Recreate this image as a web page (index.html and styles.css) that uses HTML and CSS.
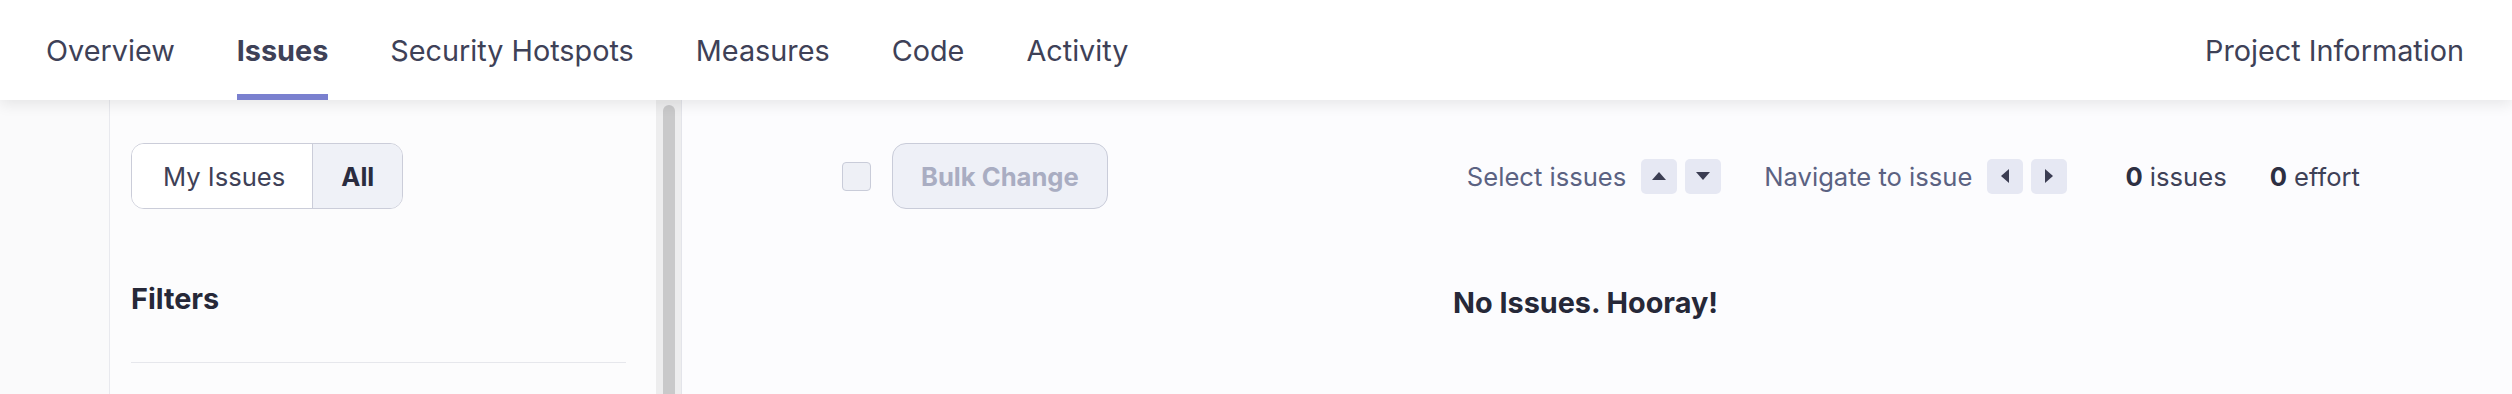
FILE: index.html
```html
<!DOCTYPE html>
<html>
<head>
<meta charset="utf-8">
<link rel="stylesheet" href="styles.css">
</head>
<body>
<header class="topbar">
  <nav class="tabs">
    <a class="tab">Overview</a>
    <a class="tab active">Issues</a>
    <a class="tab">Security Hotspots</a>
    <a class="tab">Measures</a>
    <a class="tab">Code</a>
    <a class="tab">Activity</a>
  </nav>
  <a class="tab info">Project Information</a>
</header>
<div class="page">
  <div class="gutter"></div>
  <aside class="sidebar">
    <div class="side-inner">
      <div class="toggle">
        <button class="tog">My Issues</button>
        <button class="tog selected">All</button>
      </div>
      <h2 class="filters">Filters</h2>
      <hr class="sep">
    </div>
    <div class="scroll"><div class="thumb"></div></div>
  </aside>
  <main class="main">
    <div class="toolbar">
      <div class="left">
        <span class="checkbox"></span>
        <button class="bulk">Bulk Change</button>
      </div>
      <div class="right">
        <span class="hint">Select issues</span>
        <span class="key"><svg width="14" height="8" viewBox="0 0 14 8"><path d="M7 0L14 8H0Z" fill="#3b3d52"/></svg></span>
        <span class="key"><svg width="14" height="8" viewBox="0 0 14 8"><path d="M0 0H14L7 8Z" fill="#3b3d52"/></svg></span>
        <span class="hint gap">Navigate to issue</span>
        <span class="key"><svg width="8" height="14" viewBox="0 0 8 14"><path d="M8 0V14L0 7Z" fill="#3b3d52"/></svg></span>
        <span class="key"><svg width="8" height="14" viewBox="0 0 8 14"><path d="M0 0L8 7L0 14Z" fill="#3b3d52"/></svg></span>
        <span class="count first"><b>0</b> issues</span>
        <span class="count"><b>0</b> effort</span>
      </div>
    </div>
    <div class="empty">No Issues. Hooray!</div>
  </main>
</div>
</body>
</html>
```
FILE: styles.css
```css
html, body {
  margin: 0;
  padding: 0;
}
body {
  width: 2512px;
  height: 394px;
  overflow: hidden;
  background: #fbfbfc;
  font-family: Inter, "Noto Sans", sans-serif;
  color: #3e4157;
}
.topbar {
  position: relative;
  z-index: 2;
  height: 100px;
  background: #ffffff;
  display: flex;
  justify-content: space-between;
  align-items: stretch;
  padding: 0 48px 0 46px;
  box-shadow: 0 4px 14px rgba(0, 0, 0, 0.09);
}
.tabs {
  display: flex;
  gap: 62px;
}
.tab {
  display: flex;
  align-items: center;
  font-size: 28.8px;
  color: #3e4157;
  border-bottom: 6px solid transparent;
  padding-top: 6px;
  box-sizing: border-box;
}
.tab.active {
  font-weight: 700;
  border-bottom-color: #7a80cf;
}
.page {
  display: flex;
  height: 294px;
}
.gutter {
  width: 109px;
  background: #fafafb;
}
.sidebar {
  width: 572px;
  display: flex;
  border-left: 1px solid #e8e9ee;
  background: #fcfcfd;
}
.side-inner {
  flex: 1;
  padding: 43px 30px 0 21px;
}
.toggle {
  display: inline-flex;
  height: 66px;
  border: 1.5px solid #cbcdd9;
  border-radius: 13px;
  overflow: hidden;
  box-sizing: border-box;
}
.tog {
  border: none;
  margin: 0;
  font-family: inherit;
  font-size: 25.6px;
  color: #3e4157;
  background: #ffffff;
  padding: 0 27px 0 31px;
}
.tog.selected {
  background: #eff1f7;
  border-left: 1.5px solid #cbcdd9;
  font-weight: 700;
  color: #2a2c3f;
  padding: 0 28px;
}
.filters {
  margin: 70px 0 0;
  font-size: 28.8px;
  font-weight: 700;
  color: #262838;
  line-height: 40px;
}
.sep {
  margin: 43px 0 0;
  border: none;
  border-top: 1.5px solid #e6e7ec;
}
.scroll {
  width: 25px;
  background: #ededee;
  border-right: 1px solid #e3e4ea;
  display: flex;
  justify-content: center;
  padding-top: 5px;
}
.thumb {
  width: 12px;
  background: #c9c9ca;
  border-radius: 6px 6px 0 0;
  flex: none;
  height: 300px;
}
.main {
  flex: 1;
  background: #fcfcfe;
  padding: 43px 152px 0 160px;
}
.toolbar {
  display: flex;
  justify-content: space-between;
  align-items: center;
  height: 66px;
}
.left, .right {
  display: flex;
  align-items: center;
}
.checkbox {
  width: 29px;
  height: 29px;
  box-sizing: border-box;
  border: 1.5px solid #c9ccd9;
  background: #eef0f6;
  border-radius: 4px;
}
.bulk {
  margin-left: 21px;
  height: 66px;
  box-sizing: border-box;
  border: 1.5px solid #c9ccd9;
  background: #eef0f7;
  border-radius: 14px;
  font-family: inherit;
  font-size: 25.6px;
  font-weight: 700;
  color: #a9adc2;
  padding: 0 28px;
}
.hint {
  font-size: 25.6px;
  color: #5b6282;
  margin-right: 15px;
}
.hint.gap {
  margin-left: 35px;
}
.key {
  width: 36px;
  height: 35px;
  border-radius: 5px;
  background: #e6e8f3;
  display: flex;
  align-items: center;
  justify-content: center;
  margin-right: 8px;
}
.count {
  font-size: 25.6px;
  color: #3e4157;
  margin-left: 43px;
}
.count b {
  color: #2d2f42;
}
.count.first {
  margin-left: 50px;
}
.empty {
  margin-top: 76px;
  text-align: center;
  padding-right: 31px;
  font-size: 28.8px;
  font-weight: 700;
  color: #262838;
}
```
